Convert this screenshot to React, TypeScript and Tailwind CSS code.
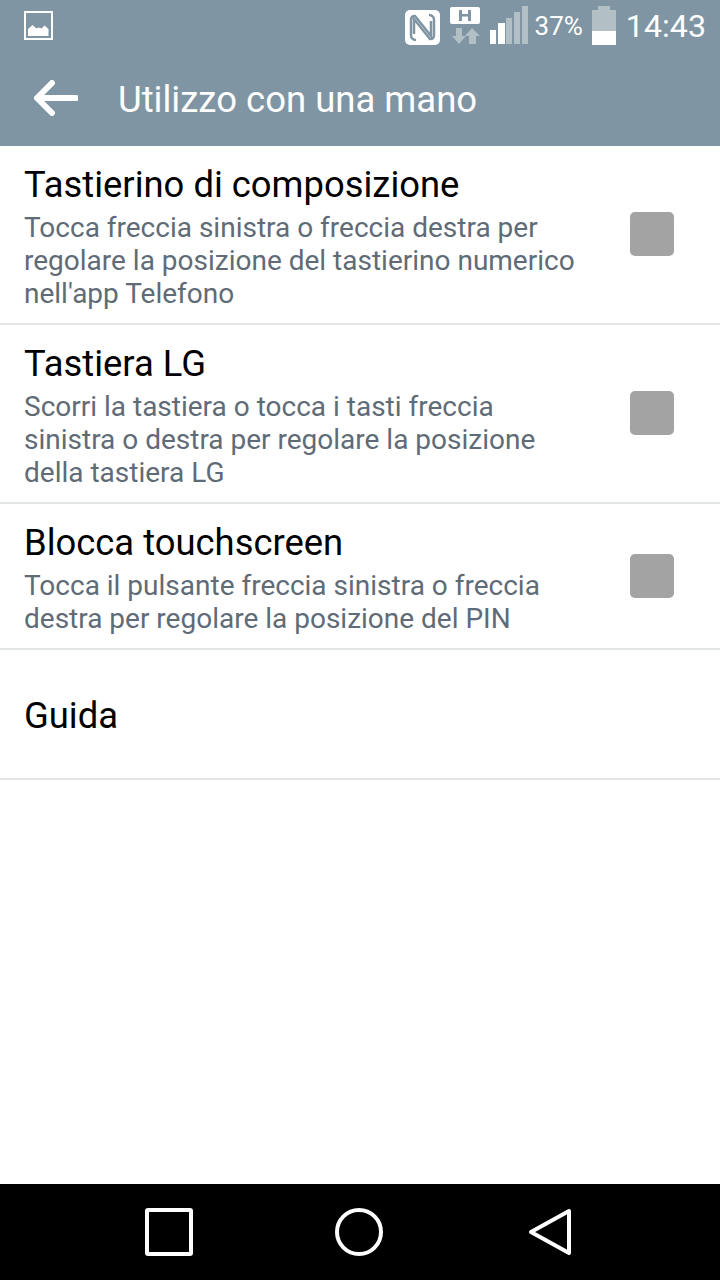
import React from 'react';

const font = "font-['Roboto',sans-serif]";

function NfcIcon() {
  return (
    <svg width="35" height="35" viewBox="0 0 35 35" className="mr-[10px]">
      <rect x="0" y="0" width="35" height="35" rx="5" fill="#fff" />
      <path d="M11 30C8 30 6 28 6 25V10c0-3 2-4 4-4l16 20V11" fill="none" stroke="#7f95a3" strokeWidth="2.500" />
      <path d="M24 5c3 0 5 2 5 5v15c0 3-2 4-4 4L9 9v15" fill="none" stroke="#7f95a3" strokeWidth="2.500" />
    </svg>
  );
}

function DataIcon() {
  return (
    <svg width="31" height="38" viewBox="0 0 31 38" className="mr-[9px]">
      <rect x="0" y="0" width="30" height="17" rx="2" fill="#fff" />
      <path d="M9 3h3v4h6V3h3v11h-3V9.500h-6V14H9z" fill="#7f95a3" />
      <path d="M6 21h6v8h4l-7 8-7-8h4z" fill="#b2c0c6" />
      <path d="M22 21l8 8h-4v8h-7v-8h-4z" fill="#b2c0c6" />
    </svg>
  );
}

function SignalIcon() {
  return (
    <svg width="38" height="38" viewBox="0 0 38 38" className="mr-[7px]">
      <rect x="0" y="24" width="6" height="14" fill="#fff" />
      <rect x="8" y="17" width="7" height="21" fill="#fff" />
      <rect x="16" y="12" width="6" height="26" fill="#b2c0c6" />
      <rect x="24" y="6" width="6" height="32" fill="#b2c0c6" />
      <rect x="32" y="0" width="6" height="38" fill="#b2c0c6" />
    </svg>
  );
}

function BatteryIcon() {
  return (
    <svg width="24" height="39" viewBox="0 0 24 39" className="mr-[10px]">
      <rect x="6" y="0" width="12" height="4" fill="#b2c0c6" />
      <rect x="0" y="4" width="24" height="21" fill="#b2c0c6" />
      <rect x="0" y="25" width="24" height="14" fill="#fff" />
    </svg>
  );
}

function StatusBar() {
  return (
    <div className="h-[50px] flex items-start justify-between pl-[24px] pr-[14px]">
      <svg width="29" height="29" viewBox="0 0 29 29" className="mt-[11px]">
        <rect x="1" y="1" width="27" height="27" fill="none" stroke="#fff" strokeWidth="2" />
        <path d="M4 25v-7l4.500-4 4 3.500 2-1 3 1 3-3 4 3.500v7z" fill="#fff" />
      </svg>
      <div className="flex items-start">
        <div className="mt-[10px]"><NfcIcon /></div>
        <div className="mt-[7px]"><DataIcon /></div>
        <div className="mt-[6px]"><SignalIcon /></div>
        <span className="mt-[8px] mr-[9px] text-[26px] leading-[36px] text-white">37%</span>
        <div className="mt-[6px]"><BatteryIcon /></div>
        <span className="mt-[6px] text-[32.2px] leading-[40px] text-white">14:43</span>
      </div>
    </div>
  );
}

function ActionBar() {
  return (
    <div className="h-[96px] flex items-center pl-[34px]">
      <svg width="44" height="36" viewBox="0 0 44 36">
        <path d="M42 18H4M18 3L3 18l15 15" fill="none" stroke="#fff" strokeWidth="6" strokeLinecap="round" strokeLinejoin="round" />
      </svg>
      <h1 className="ml-[40px] mt-[3px] text-[36.5px] leading-[40px] text-white">Utilizzo con una mano</h1>
    </div>
  );
}

function Row({ title, lines, h, boxTop }: { title: string; lines: string[]; h: string; boxTop: string }) {
  return (
    <div className={`${h} border-b-2 border-[#e2e5e5] flex justify-between pl-[24px] pr-[46px]`}>
      <div className="pt-[19px]">
        <div className="text-[36.4px] leading-[40px] text-black">{title}</div>
        <div className="text-[28px] leading-[33px] text-[#5f6b76] mt-[6px]">
          {lines.map((l) => (
            <div key={l} className="whitespace-nowrap">{l}</div>
          ))}
        </div>
      </div>
      <div className={`${boxTop} w-[44px] h-[44px] rounded-[5px] bg-[#a3a3a3]`} />
    </div>
  );
}

export default function App() {
  return (
    <div className={`${font} w-[720px] h-[1280px] flex flex-col bg-white overflow-hidden`}>
      <div className="bg-[#7f95a3]">
        <StatusBar />
        <ActionBar />
      </div>
      <div className="flex-1">
        <Row
          h="h-[179px]"
          boxTop="mt-[66px]"
          title="Tastierino di composizione"
          lines={[
            'Tocca freccia sinistra o freccia destra per',
            'regolare la posizione del tastierino numerico',
            "nell'app Telefono",
          ]}
        />
        <Row
          h="h-[179px]"
          boxTop="mt-[66px]"
          title="Tastiera LG"
          lines={[
            'Scorri la tastiera o tocca i tasti freccia',
            'sinistra o destra per regolare la posizione',
            'della tastiera LG',
          ]}
        />
        <Row
          h="h-[146px]"
          boxTop="mt-[50px]"
          title="Blocca touchscreen"
          lines={[
            'Tocca il pulsante freccia sinistra o freccia',
            'destra per regolare la posizione del PIN',
          ]}
        />
        <div className="h-[130px] border-b-2 border-[#e2e5e5] flex items-center pl-[24px]">
          <span className="mt-[4px] text-[36.4px] leading-[40px] text-black">Guida</span>
        </div>
      </div>
      <div className="h-[96px] bg-black flex items-center justify-between pl-[145px] pr-[149px]">
        <svg width="48" height="48" viewBox="0 0 48 48">
          <rect x="2" y="2" width="44" height="44" rx="1" fill="none" stroke="#fff" strokeWidth="4" />
        </svg>
        <svg width="48" height="48" viewBox="0 0 48 48" className="ml-[-4px]">
          <circle cx="24" cy="24" r="22" fill="none" stroke="#fff" strokeWidth="4" />
        </svg>
        <svg width="43" height="48" viewBox="0 0 43 48">
          <path d="M41 3L3 24l38 21z" fill="none" stroke="#fff" strokeWidth="4" strokeLinejoin="round" />
        </svg>
      </div>
    </div>
  );
}
